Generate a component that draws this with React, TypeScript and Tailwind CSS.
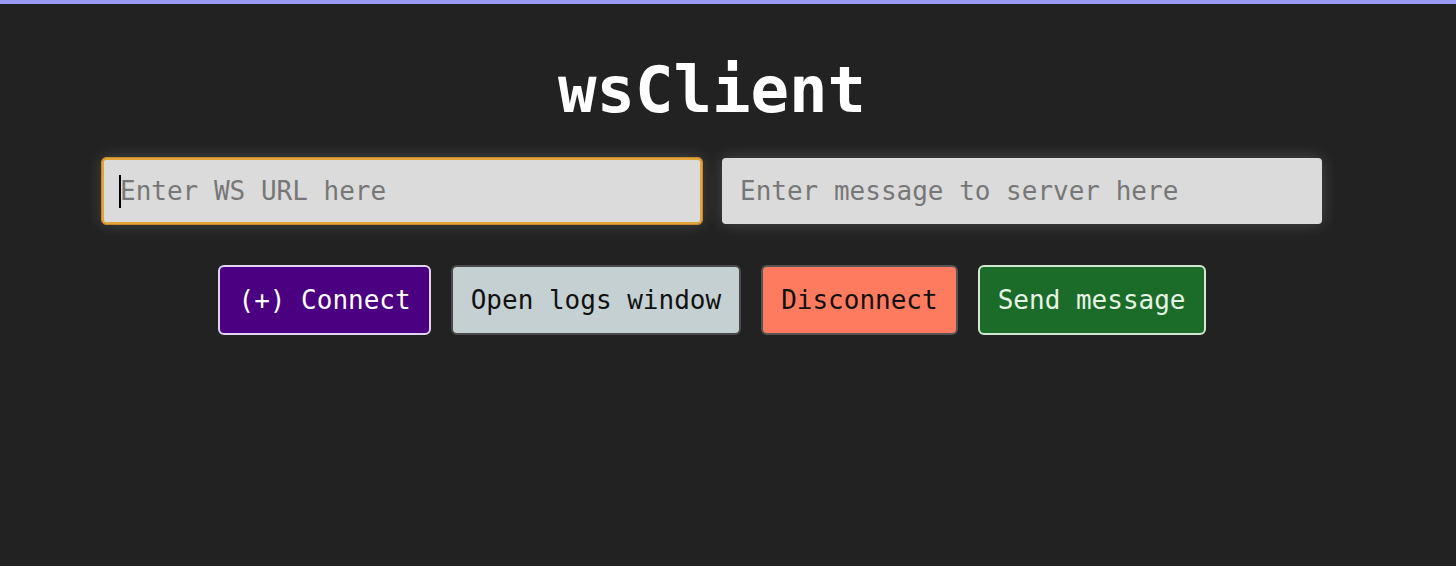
import { useState } from "react";

const mono = "font-['DejaVu_Sans_Mono','Liberation_Mono',monospace]";

export default function App() {
  const [url, setUrl] = useState("");
  const [msg, setMsg] = useState("");

  return (
    <div className={`min-h-[566px] bg-[#222222] border-t-4 border-[#9b9bf5] ${mono}`}>
      <div className="w-[1424px] flex flex-col items-center">
        <h1 className="mt-[54px] text-[64px] leading-none font-bold text-white">wsClient</h1>

        {/* inputs */}
        <div className="mt-[36px] flex gap-[20px]">
          <div className="relative">
            <input
              value={url}
              onChange={(e) => setUrl(e.target.value)}
              placeholder="Enter WS URL here"
              className="w-[600px] h-[66px] px-[16px] rounded-[4px] bg-[#dbdbdb] text-[26px] text-black placeholder:text-[#777777] border-2 border-[#e3a43a] outline outline-1 outline-[#c88a2a] shadow-[0_0_16px_rgba(255,255,255,0.18)] caret-black"
            />
            {url === "" && (
              <span className="pointer-events-none absolute left-[17px] top-[17px] h-[33px] w-[2px] bg-black" />
            )}
          </div>
          <input
            value={msg}
            onChange={(e) => setMsg(e.target.value)}
            placeholder="Enter message to server here"
            className="w-[600px] h-[66px] px-[16px] rounded-[4px] bg-[#dbdbdb] text-[26px] text-black placeholder:text-[#777777] border-2 border-[#dbdbdb] outline-none shadow-[0_0_16px_rgba(255,255,255,0.18)]"
          />
        </div>

        {/* buttons */}
        <div className="mt-[41px] flex gap-[20px]">
          <button className="h-[70px] px-[18px] rounded-[6px] border-2 border-[#e4d4f4] bg-[#4b0082] text-white text-[26px]">
            (+) Connect
          </button>
          <button className="h-[70px] px-[18px] rounded-[6px] border-2 border-[#4a4a4a] bg-[#c4d0d2] text-[#111111] text-[26px]">
            Open logs window
          </button>
          <button className="h-[70px] px-[18px] rounded-[6px] border-2 border-[#555555] bg-[#ff7b5f] text-[#111111] text-[26px]">
            Disconnect
          </button>
          <button className="h-[70px] px-[18px] rounded-[6px] border-2 border-[#d2e8d2] bg-[#1b6b29] text-[#e6f4e6] text-[26px]">
            Send message
          </button>
        </div>
      </div>
    </div>
  );
}
